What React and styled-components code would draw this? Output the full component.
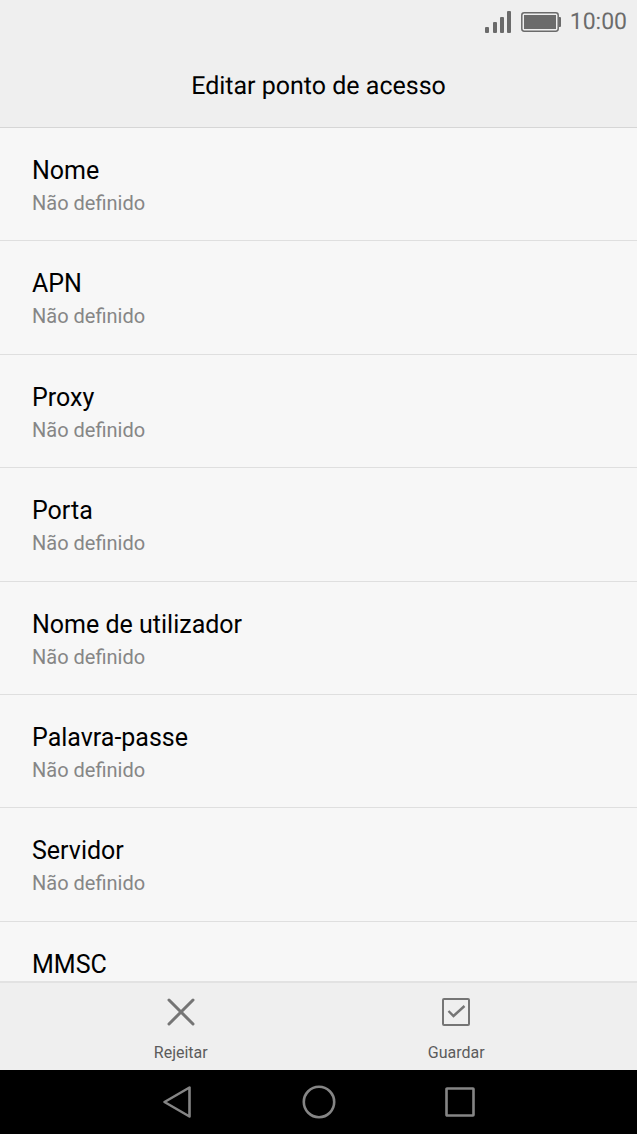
import { createGlobalStyle, styled } from "styled-components";

const GlobalStyle = createGlobalStyle`
  * {
    box-sizing: border-box;
    margin: 0;
    padding: 0;
  }

  body {
    background: #f7f7f7;
    font-family: Roboto, "Noto Sans", sans-serif;
    text-rendering: geometricPrecision;
  }

  button {
    border: 0;
    background: none;
    font: inherit;
    color: inherit;
    cursor: pointer;
  }
`;

const Screen = styled.div`
  height: 100vh;
  display: flex;
  flex-direction: column;
  overflow: hidden;
`;

const StatusBar = styled.div`
  height: 44px;
  flex-shrink: 0;
  padding: 0 10px;
  display: flex;
  align-items: center;
  justify-content: flex-end;
  gap: 9px;
  background: #efefef;
  color: #6b6b6b;
  font-size: 23px;
  line-height: 24px;
`;

const Header = styled.header`
  height: 84px;
  flex-shrink: 0;
  padding-top: 2px;
  display: flex;
  align-items: center;
  justify-content: center;
  background: #efefef;
  border-bottom: 1px solid #d6d6d6;
`;

const Title = styled.h1`
  font-size: 25px;
  font-weight: 400;
  line-height: 32px;
  color: #000;
`;

const List = styled.ul`
  flex: 1;
  min-height: 0;
  overflow-y: auto;
  scrollbar-width: none;
  list-style: none;
`;

const Row = styled.li`
  height: 10vh;
  border-bottom: 1px solid #dfdfdf;
`;

const RowButton = styled.button`
  width: 100%;
  height: 100%;
  padding: 27px 32px 0;
  display: flex;
  flex-direction: column;
  gap: 3px;
  text-align: left;
`;

const RowTitle = styled.span`
  font-size: 25px;
  line-height: 32px;
  color: #000;
`;

const RowValue = styled.span`
  font-size: 20px;
  line-height: 26px;
  color: #868686;
`;

const ActionBar = styled.footer`
  height: 89px;
  flex-shrink: 0;
  padding: 0 43px;
  display: flex;
  background: #efefef;
  border-top: 2px solid #e2e2e2;
`;

const Action = styled.button`
  flex: 1;
  padding-top: 15px;
  display: flex;
  flex-direction: column;
  align-items: center;
  gap: 17px;

  span {
    font-size: 16px;
    line-height: 20px;
    color: #5c5c5c;
  }
`;

const NavBar = styled.nav`
  height: 64px;
  flex-shrink: 0;
  padding: 0 106px;
  display: flex;
  background: #000;
`;

const NavButton = styled.button`
  flex: 1;
  display: flex;
  align-items: center;
  justify-content: center;
`;

const Icon = styled.svg`
  display: block;
  fill: none;
  stroke: ${(props) => props.$color || "#757575"};
  stroke-width: ${(props) => props.$weight || 3};
  stroke-linecap: round;
  stroke-linejoin: round;
`;

const fields = [
  "Nome",
  "APN",
  "Proxy",
  "Porta",
  "Nome de utilizador",
  "Palavra-passe",
  "Servidor",
  "MMSC",
];

const SignalIcon = () => (
  <svg width="27" height="22" viewBox="0 0 27 22" fill="#6b6b6b">
    <rect x="0" y="16" width="4" height="6" rx="1" />
    <rect x="8" y="11" width="4" height="11" rx="1" />
    <rect x="15" y="6" width="4" height="16" rx="1" />
    <rect x="22" y="0" width="4" height="22" rx="1" />
  </svg>
);

const BatteryIcon = () => (
  <svg width="40" height="20" viewBox="0 0 40 20" fill="#6b6b6b">
    <rect x="0.8" y="0.8" width="36.4" height="18.4" rx="2.4" fill="none" stroke="#6b6b6b" strokeWidth="1.5" />
    <rect x="3" y="3" width="32" height="14" />
    <path d="M38 5h1q1 0 1 1v8q0 1-1 1h-1z" />
  </svg>
);

const App = () => {
  return (
    <>
      <GlobalStyle />
      <Screen>
        <StatusBar>
          <SignalIcon />
          <BatteryIcon />
          <span>10:00</span>
        </StatusBar>

        <Header>
          <Title>Editar ponto de acesso</Title>
        </Header>

        <List>
          {fields.map((field) => (
            <Row key={field}>
              <RowButton type="button">
                <RowTitle>{field}</RowTitle>
                <RowValue>Não definido</RowValue>
              </RowButton>
            </Row>
          ))}
        </List>

        <ActionBar>
          <Action type="button">
            <Icon width="28" height="28" viewBox="0 0 28 28">
              <path d="M2 2l24 24M26 2L2 26" />
            </Icon>
            <span>Rejeitar</span>
          </Action>
          <Action type="button">
            <Icon width="28" height="28" viewBox="0 0 28 28" $weight={2}>
              <rect x="1" y="1" width="26" height="26" rx="1" />
              <path d="M6.500 13l5 5L22.500 8" strokeWidth="2.4" strokeLinecap="butt" strokeLinejoin="miter" />
            </Icon>
            <span>Guardar</span>
          </Action>
        </ActionBar>

        <NavBar>
          <NavButton type="button" aria-label="Voltar">
            <Icon width="30" height="34" viewBox="0 0 30 34" $color="#858585" $weight={2.6}>
              <path d="M27.500 2.500v29L2.500 17z" />
            </Icon>
          </NavButton>
          <NavButton type="button" aria-label="Início">
            <Icon width="34" height="34" viewBox="0 0 34 34" $color="#858585" $weight={2.6}>
              <circle cx="17" cy="17" r="15.200" />
            </Icon>
          </NavButton>
          <NavButton type="button" aria-label="Recentes">
            <Icon width="30" height="30" viewBox="0 0 30 30" $color="#858585" $weight={2.6}>
              <rect x="1.500" y="1.500" width="27" height="27" rx="0.500" />
            </Icon>
          </NavButton>
        </NavBar>
      </Screen>
    </>
  );
};

export default App;
